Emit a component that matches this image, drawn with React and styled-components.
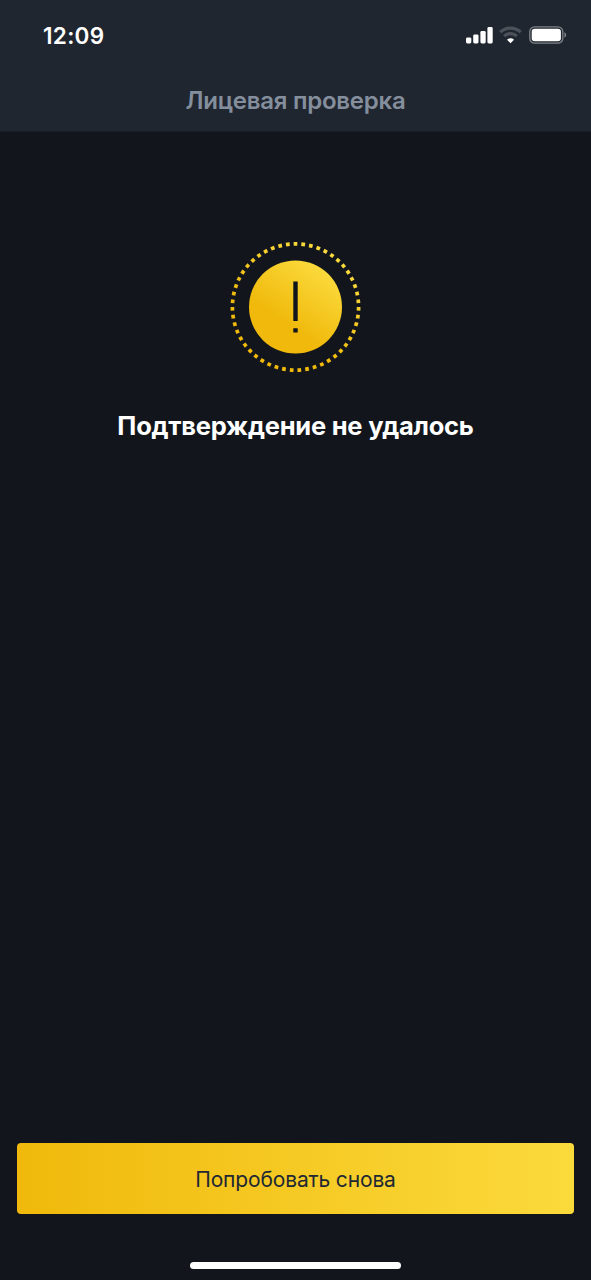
import React from "react";
import styled, {createGlobalStyle} from "styled-components";

const GlobalStyle = createGlobalStyle`
  * {
    box-sizing: border-box;
  }

  body {
    margin: 0;
    background-color: #12161c;
    font-family: Inter, "Liberation Sans", sans-serif;
  }
`;

const Screen = styled.div`
  display: flex;
  flex-direction: column;
  width: 100%;
  height: 1280px;
  background-color: #12161c;
`;

const Header = styled.header`
  height: 132px;
  background-color: #202630;
  border-bottom: 1px solid #191e26;
`;

const StatusBar = styled.div`
  display: flex;
  align-items: center;
  justify-content: space-between;
  height: 70px;
  padding: 0 24px 0 43px;
`;

const Time = styled.span`
  padding-top: 2px;
  color: #fff;
  font-size: 22.5px;
  font-weight: 600;
  line-height: 28px;
  letter-spacing: 0.3px;
`;

const StatusIcons = styled.div`
  display: flex;
  align-items: center;
  gap: 6px;

  svg {
    display: block;
  }
`;

const Title = styled.h1`
  margin: 0;
  padding-top: 1px;
  color: #848e9c;
  font-size: 24px;
  font-weight: 600;
  line-height: 60px;
  letter-spacing: -0.25px;
  text-align: center;
`;

const Content = styled.main`
  display: flex;
  flex: 1;
  flex-direction: column;
  align-items: center;
  padding-top: 109px;

  svg {
    display: block;
  }
`;

const Message = styled.h2`
  margin: 36px 0 0;
  color: #fff;
  font-size: 25.5px;
  font-weight: 700;
  line-height: 34px;
  letter-spacing: -0.23px;
  white-space: nowrap;
`;

const Footer = styled.footer`
  display: flex;
  flex-direction: column;
  align-items: center;
  padding: 0 17px 11px;
`;

const RetryButton = styled.button`
  width: 100%;
  height: 71px;
  margin-bottom: 48px;
  padding: 2px 0 0;
  border: 0;
  border-radius: 4px;
  background: linear-gradient(90deg, #f0b90b 0%, #fbda3c 100%);
  color: #212833;
  font-family: inherit;
  font-size: 21px;
  font-weight: 400;
  letter-spacing: -0.15px;
  cursor: pointer;
`;

const HomeIndicator = styled.div`
  width: 211px;
  height: 7px;
  border-radius: 4px;
  background-color: #fff;
`;

function SignalIcon() {
    return (
        <svg width="27" height="18" viewBox="0 0 27 18" fill="#fff">
            <rect x="0" y="11.4" width="5.3" height="6" rx="1.4"/>
            <rect x="7.2" y="8.4" width="5.3" height="9" rx="1.4"/>
            <rect x="14.4" y="4.9" width="5.3" height="12.5" rx="1.4"/>
            <rect x="21.4" y="1.1" width="5.3" height="16.3" rx="1.4"/>
        </svg>
    );
}

function WifiIcon() {
    return (
        <svg width="24" height="18" viewBox="0 0 24 18" fill="none">
            <path d="M1.3 6.2a14.7 14.7 0 0 1 20.4 0" stroke="#4d525a" strokeWidth="3.2"/>
            <path d="M5.2 10.1a9.2 9.2 0 0 1 12.6 0" stroke="#4d525a" strokeWidth="3.2"/>
            <path d="M11.5 17.2 8 13.7a5 5 0 0 1 7 0Z" fill="#fff"/>
        </svg>
    );
}

function BatteryIcon() {
    return (
        <svg width="38" height="18" viewBox="0 0 38 18" fill="none">
            <rect x="0.8" y="0.8" width="33" height="16.4" rx="4.8" stroke="#7d8187" strokeWidth="1.3"/>
            <rect x="2.7" y="2.7" width="29.2" height="12.6" rx="3" fill="#fff"/>
            <path d="M35.4 6.3c2.4 .8 2.4 4.6 0 5.4Z" fill="#7d8187"/>
        </svg>
    );
}

function WarningIcon() {
    return (
        <svg width="131" height="132" viewBox="0.5 0 131 132">
            <defs>
                <linearGradient id="ring" gradientUnits="userSpaceOnUse" x1="50" y1="90" x2="98" y2="16">
                    <stop offset="0" stopColor="#f0b90b"/>
                    <stop offset="1" stopColor="#fbda3c"/>
                </linearGradient>
                <linearGradient id="disc" gradientUnits="userSpaceOnUse" x1="54" y1="82" x2="92" y2="26">
                    <stop offset="0" stopColor="#f0b90b"/>
                    <stop offset="1" stopColor="#fbda3c"/>
                </linearGradient>
            </defs>
            {/* 51 square dots, the first one centred at the top */}
            <path
                d="M66 2.9a63.1 63.1 0 0 1 0 126.2a63.1 63.1 0 0 1 0-126.2"
                fill="none"
                stroke="url(#ring)"
                strokeWidth="3.7"
                pathLength="510"
                strokeDasharray="4.8 5.2"
                strokeDashoffset="2.4"
            />
            <circle cx="66" cy="66" r="46.5" fill="url(#disc)"/>
            <path d="M63.8 40.5h4.4v39.5h-4.4zM63.8 87.2h4.4v4.3h-4.4z" fill="#12161c"/>
        </svg>
    );
}

function App() {
    return (
        <>
            <GlobalStyle/>
            <Screen>
                <Header>
                    <StatusBar>
                        <Time>12:09</Time>
                        <StatusIcons>
                            <SignalIcon/>
                            <WifiIcon/>
                            <BatteryIcon/>
                        </StatusIcons>
                    </StatusBar>
                    <Title>Лицевая проверка</Title>
                </Header>
                <Content>
                    <WarningIcon/>
                    <Message>Подтверждение не удалось</Message>
                </Content>
                <Footer>
                    <RetryButton type="button">Попробовать снова</RetryButton>
                    <HomeIndicator/>
                </Footer>
            </Screen>
        </>
    );
}

export default App;
